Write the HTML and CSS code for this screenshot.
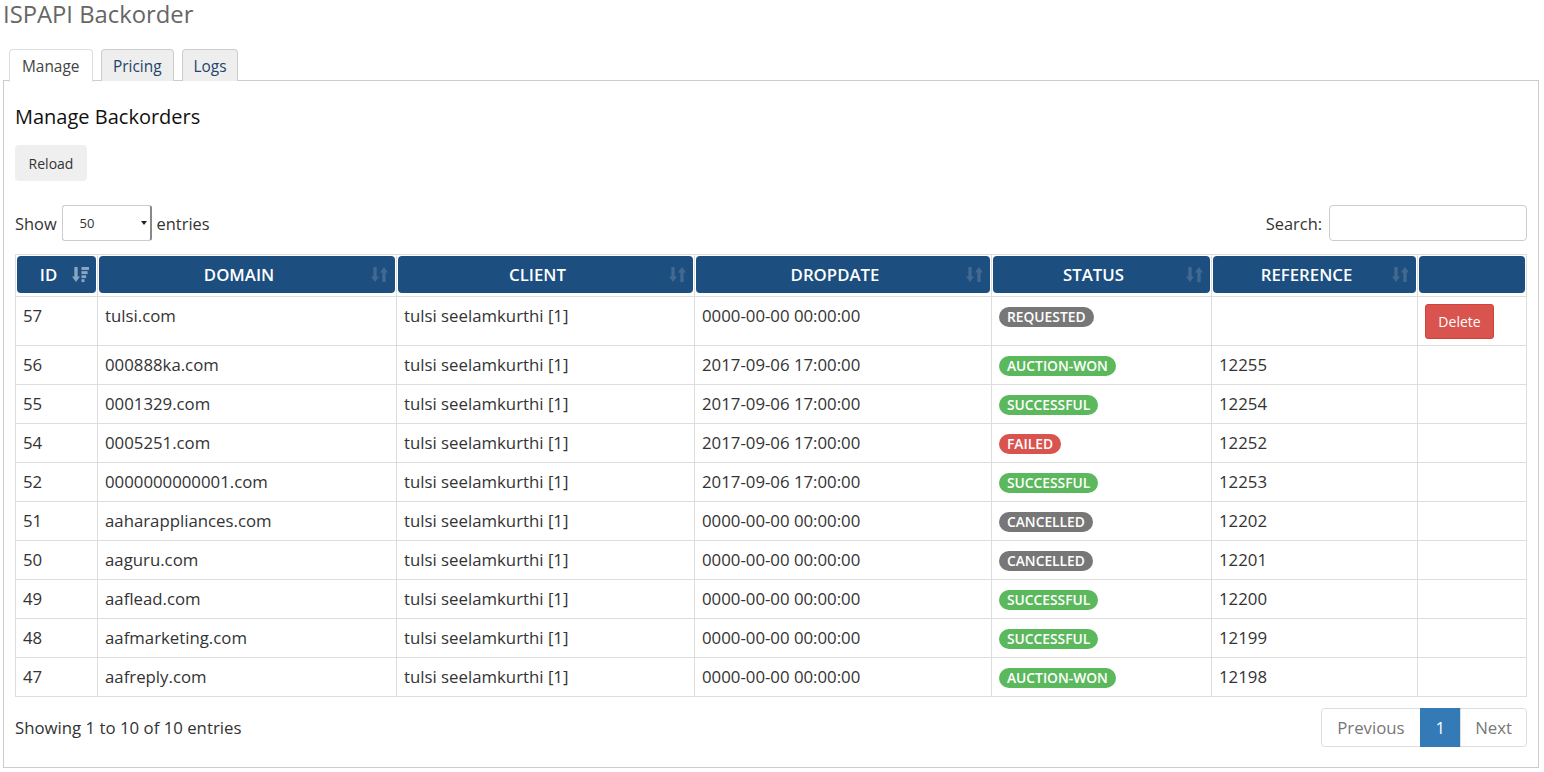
FILE: index.html
```html
<!DOCTYPE html>
<html>
<head>
<meta charset="utf-8">
<title>ISPAPI Backorder</title>
<link rel="stylesheet" href="styles.css">
</head>
<body>
<h1 class="page-title">ISPAPI Backorder</h1>
<ul class="tabs">
  <li class="tab active">Manage</li>
  <li class="tab">Pricing</li>
  <li class="tab">Logs</li>
</ul>
<div class="tab-content">
  <h2 class="section-title">Manage Backorders</h2>
  <button class="btn-reload">Reload</button>
  <div class="controls">
    <label class="length">Show
      <span class="select"><span class="select-val">50</span><span class="caret"></span></span>
      entries</label>
    <label class="search">Search: <span class="search-input"></span></label>
  </div>
  <table class="grid">
    <colgroup>
      <col style="width:82px"><col style="width:299px"><col style="width:298px"><col style="width:297px"><col style="width:220px"><col style="width:206px"><col style="width:109px">
    </colgroup>
    <thead>
      <tr>
        <th><div class="th-in"><span class="th-t">ID</span><svg class="sort active" viewBox="0 0 18 18"><rect x="2.5" y="1" width="3.5" height="11"/><polygon points="0,11 8.5,11 4.25,17"/><rect x="10" y="1" width="8" height="3.2"/><rect x="10" y="5.4" width="6.5" height="3.2"/><rect x="10" y="9.8" width="5" height="3"/><rect x="10" y="14" width="3.2" height="3"/></svg></div></th>
        <th><div class="th-in"><span class="th-t">DOMAIN</span><svg class="sort" viewBox="0 0 18 18"><rect x="2.5" y="1" width="3.5" height="11"/><polygon points="0,11 8.5,11 4.25,17"/><rect x="12" y="6" width="3.5" height="11"/><polygon points="9.5,7 18,7 13.75,1"/></svg></div></th>
        <th><div class="th-in"><span class="th-t">CLIENT</span><svg class="sort" viewBox="0 0 18 18"><rect x="2.5" y="1" width="3.5" height="11"/><polygon points="0,11 8.5,11 4.25,17"/><rect x="12" y="6" width="3.5" height="11"/><polygon points="9.5,7 18,7 13.75,1"/></svg></div></th>
        <th><div class="th-in"><span class="th-t">DROPDATE</span><svg class="sort" viewBox="0 0 18 18"><rect x="2.5" y="1" width="3.5" height="11"/><polygon points="0,11 8.5,11 4.25,17"/><rect x="12" y="6" width="3.5" height="11"/><polygon points="9.5,7 18,7 13.75,1"/></svg></div></th>
        <th><div class="th-in"><span class="th-t">STATUS</span><svg class="sort" viewBox="0 0 18 18"><rect x="2.5" y="1" width="3.5" height="11"/><polygon points="0,11 8.5,11 4.25,17"/><rect x="12" y="6" width="3.5" height="11"/><polygon points="9.5,7 18,7 13.75,1"/></svg></div></th>
        <th><div class="th-in"><span class="th-t">REFERENCE</span><svg class="sort" viewBox="0 0 18 18"><rect x="2.5" y="1" width="3.5" height="11"/><polygon points="0,11 8.5,11 4.25,17"/><rect x="12" y="6" width="3.5" height="11"/><polygon points="9.5,7 18,7 13.75,1"/></svg></div></th>
        <th><div class="th-in"></div></th>
      </tr>
    </thead>
    <tbody>
      <tr class="first"><td>57</td><td>tulsi.com</td><td>tulsi seelamkurthi [1]</td><td>0000-00-00 00:00:00</td><td><span class="lbl grey">REQUESTED</span></td><td></td><td><button class="btn-delete">Delete</button></td></tr>
      <tr><td>56</td><td>000888ka.com</td><td>tulsi seelamkurthi [1]</td><td>2017-09-06 17:00:00</td><td><span class="lbl green">AUCTION-WON</span></td><td>12255</td><td></td></tr>
      <tr><td>55</td><td>0001329.com</td><td>tulsi seelamkurthi [1]</td><td>2017-09-06 17:00:00</td><td><span class="lbl green">SUCCESSFUL</span></td><td>12254</td><td></td></tr>
      <tr><td>54</td><td>0005251.com</td><td>tulsi seelamkurthi [1]</td><td>2017-09-06 17:00:00</td><td><span class="lbl red">FAILED</span></td><td>12252</td><td></td></tr>
      <tr><td>52</td><td>0000000000001.com</td><td>tulsi seelamkurthi [1]</td><td>2017-09-06 17:00:00</td><td><span class="lbl green">SUCCESSFUL</span></td><td>12253</td><td></td></tr>
      <tr><td>51</td><td>aaharappliances.com</td><td>tulsi seelamkurthi [1]</td><td>0000-00-00 00:00:00</td><td><span class="lbl grey">CANCELLED</span></td><td>12202</td><td></td></tr>
      <tr><td>50</td><td>aaguru.com</td><td>tulsi seelamkurthi [1]</td><td>0000-00-00 00:00:00</td><td><span class="lbl grey">CANCELLED</span></td><td>12201</td><td></td></tr>
      <tr><td>49</td><td>aaflead.com</td><td>tulsi seelamkurthi [1]</td><td>0000-00-00 00:00:00</td><td><span class="lbl green">SUCCESSFUL</span></td><td>12200</td><td></td></tr>
      <tr><td>48</td><td>aafmarketing.com</td><td>tulsi seelamkurthi [1]</td><td>0000-00-00 00:00:00</td><td><span class="lbl green">SUCCESSFUL</span></td><td>12199</td><td></td></tr>
      <tr><td>47</td><td>aafreply.com</td><td>tulsi seelamkurthi [1]</td><td>0000-00-00 00:00:00</td><td><span class="lbl green">AUCTION-WON</span></td><td>12198</td><td></td></tr>
    </tbody>
  </table>
  <div class="footer">
    <div class="info">Showing 1 to 10 of 10 entries</div>
    <ul class="pager">
      <li class="pg disabled">Previous</li>
      <li class="pg current">1</li>
      <li class="pg disabled">Next</li>
    </ul>
  </div>
</div>
</body>
</html>
```
FILE: styles.css
```css
* { box-sizing: border-box; }
html, body { margin: 0; padding: 0; background: #fff; }
body {
  font-family: "Open Sans", "Liberation Sans", sans-serif;
  color: #333;
  font-size: 16.8px;
  padding: 0 5px 0 3px;
}
.page-title {
  margin: 0;
  font-size: 23.8px;
  font-weight: 400;
  line-height: 28px;
  color: #666;
}
.tabs {
  list-style: none;
  margin: 21px 0 0 0;
  padding: 0 0 0 6px;
  display: flex;
  align-items: flex-start;
  gap: 8px;
  height: 32px;
  position: relative;
  z-index: 1;
}
.tab {
  height: 32px;
  padding: 0 11px;
  line-height: 33px;
  font-size: 15.4px;
  border: 1px solid #ccc;
  border-bottom: none;
  border-radius: 4px 4px 0 0;
  background: #eee;
  color: #23446b;
}
.tab:last-child { padding: 0 11px; }
.tab.active {
  background: #fff;
  color: #444;
  border-color: #ddd;
  height: 33px;
  padding: 0 12px 0 12px;
  width: 84px;
}
.tab-content {
  margin-top: -1px;
  border: 1px solid #ccc;
  padding: 12px 11px 20px 11px;
  height: 688px;
}
.section-title {
  margin: 11px 0 0 0;
  font-size: 20px;
  font-weight: 400;
  line-height: 26px;
  color: #111;
}
.btn-reload {
  margin-top: 15px;
  width: 72px;
  height: 36px;
  border: none;
  border-radius: 4px;
  background: #efefef;
  color: #333;
  font-family: inherit;
  font-size: 14px;
  padding: 0;
}
.controls {
  margin-top: 24px;
  display: flex;
  justify-content: space-between;
  align-items: center;
  height: 36px;
}
.length, .search {
  display: flex;
  align-items: center;
  gap: 5px;
  font-size: 16.4px;
}
.select {
  display: flex;
  align-items: center;
  justify-content: space-between;
  width: 90px;
  height: 36px;
  border: 1px solid #ccc;
  border-right: 2px solid #888;
  border-radius: 3px;
  padding: 0 3px 0 17px;
  font-size: 13px;
  color: #333;
}
.caret {
  width: 0; height: 0;
  border-left: 3px solid transparent;
  border-right: 3px solid transparent;
  border-top: 4px solid #222;
}
.search { gap: 7px; }
.search-input {
  display: block;
  width: 198px;
  height: 36px;
  border: 1px solid #ccc;
  border-radius: 4px;
}
.grid {
  margin-top: 13px;
  width: 1512px;
  border-collapse: collapse;
  table-layout: fixed;
  border: 1px solid #ddd;
}
.grid th {
  padding: 1px 1px 3px 1px;
  border-left: 1px solid #ddd;
  border-right: 1px solid #ddd;
  background: #fff;
}
.th-in {
  height: 37px;
  background: #1c4e80;
  border-radius: 4px;
  display: flex;
  align-items: center;
  padding: 0 7px 0 8px;
  color: #fff;
  font-size: 16.8px;
  font-weight: 600;
}
.th-t { flex: 1; text-align: center; }
.sort { width: 17px; height: 17px; fill: #43698f; }
.sort.active { fill: #8aa5c2; }
.grid td {
  border: 1px solid #ddd;
  padding: 8px 8px 8px 7px;
  line-height: 22px;
  vertical-align: top;
  font-size: 16.8px;
  color: #333;
  white-space: nowrap;
}
.lbl {
  display: inline-block;
  font-size: 13.8px;
  font-weight: 600;
  line-height: 16px;
  padding: 2px 8px;
  border-radius: 10px;
  color: #fff;
  vertical-align: top;
  margin-top: 2px;
  margin-bottom: -2px;
}
.grey { background: #777; }
.green { background: #5cb85c; }
.red { background: #d9534f; }
.btn-delete {
  display: block;
  margin: -1px 0 -2px 0;
  width: 69px;
  height: 35px;
  border: 1px solid #d43f3a;
  border-radius: 3px;
  background: #d9534f;
  color: #fff;
  font-family: inherit;
  font-size: 14px;
  padding: 0;
}
.footer {
  margin-top: 11px;
  display: flex;
  justify-content: space-between;
  align-items: center;
}
.info { font-size: 16.8px; }
.pager {
  list-style: none;
  margin: 0;
  padding: 0;
  display: flex;
}
.pg {
  height: 39px;
  line-height: 37px;
  padding: 0 14px;
  border: 1px solid #ddd;
  margin-left: -1px;
  font-size: 16.8px;
  color: #777;
}
.pg:first-child { border-radius: 4px 0 0 4px; padding: 0 15px; }
.pg:last-child { border-radius: 0 4px 4px 0; }
.pg.current { background: #337ab7; border-color: #337ab7; color: #fff; padding: 0 15px; }
```
